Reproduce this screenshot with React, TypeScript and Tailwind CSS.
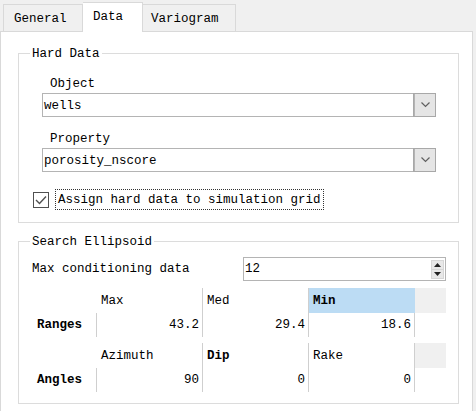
import type { JSX } from "react";

const font = { fontFamily: '"Liberation Mono", "DejaVu Sans Mono", monospace' };

function Chevron(): JSX.Element {
  return (
    <svg width="9" height="6" viewBox="0 0 9 6" fill="none">
      <polyline points="0.5,0.5 4.5,4.5 8.5,0.5" stroke="#606060" strokeWidth="1.2" />
    </svg>
  );
}

function Combo({ value }: { value: string }): JSX.Element {
  return (
    <div className="ml-[23px] mr-[22px] mt-[1px] flex h-[24px] border border-[#b4b4b4] bg-white">
      <div className="flex flex-1 items-center pl-[1px] pt-[1px] leading-[16px]">{value}</div>
      <div className="flex w-[21px] items-center justify-center border-l border-[#b4b4b4] bg-[#e5e5e5] outline outline-1 outline-[#a8a8a8]">
        <Chevron />
      </div>
    </div>
  );
}

function SpinBox({ value }: { value: string }): JSX.Element {
  return (
    <div className="mr-[12px] flex h-[24px] w-[203px] items-center border border-[#b4b4b4] bg-white">
      <div className="flex-1 pl-[1px] leading-[16px]">{value}</div>
      <div className="mr-[1px] flex h-[19px] w-[13px] flex-col gap-[1px] bg-[#d6d6d6] p-[1px]">
        <div className="flex flex-1 items-center justify-center bg-[#e8e8e8]">
          <svg width="7" height="4" viewBox="0 0 7 4"><polygon points="3.5,0 7,4 0,4" fill="#222" /></svg>
        </div>
        <div className="flex flex-1 items-center justify-center bg-[#e8e8e8]">
          <svg width="7" height="4" viewBox="0 0 7 4"><polygon points="0,0 7,0 3.5,4" fill="#222" /></svg>
        </div>
      </div>
    </div>
  );
}

type Head = { label: string; bold?: boolean; selected?: boolean };

function ParamTable({ title, heads, values, className }: { title: string; heads: Head[]; values: string[]; className: string }): JSX.Element {
  return (
    <div className={`ml-[13px] ${className}`}>
      <div className="flex h-[25px]">
        <div className="w-[65px]" />
        {heads.map((h) => (
          <div
            key={h.label}
            className={`flex w-[106px] items-center border-r pl-[4px] leading-[16px] ${
              h.selected ? "border-[#bcdcf4] bg-[#bcdcf4]" : "border-[#cfcfcf] bg-white"
            } ${h.bold ? "font-bold" : ""}`}
          >
            {h.label}
          </div>
        ))}
        <div className="w-[31px] bg-[#f0f0f0]" />
      </div>
      <div className="flex h-[24px]">
        <div className="flex w-[65px] items-center border-r border-[#cfcfcf] pl-[5px] font-bold leading-[16px]">{title}</div>
        {values.map((v, i) => (
          <div key={i} className="flex w-[106px] items-center justify-end border-r border-[#cfcfcf] pr-[3px] leading-[16px]">
            {v}
          </div>
        ))}
      </div>
    </div>
  );
}

export default function App(): JSX.Element {
  return (
    <div className="relative h-[411px] w-[476px] overflow-hidden bg-[#f0f0f0] text-[12.5px] text-black" style={font}>
      {/* Tabs */}
      <div className="flex h-[31px] items-end pl-[3px]">
        <div className="relative z-10 flex h-[27px] w-[80px] items-center border border-b-0 border-[#d9d9d9] bg-[#f0f0f0] pl-[10px] pt-[1px] leading-[16px]">
          General
        </div>
        <div className="relative z-10 -mb-px flex h-[30px] w-[60px] items-center border border-b-0 border-l-0 border-[#d9d9d9] bg-white pb-[2px] pl-[10px] leading-[16px]">
          Data
        </div>
        <div className="relative z-10 flex h-[27px] w-[93px] items-center border border-b-0 border-l-0 border-[#d9d9d9] bg-[#f0f0f0] pl-[8px] pt-[1px] leading-[16px]">
          Variogram
        </div>
      </div>

      {/* Pane */}
      <div className="h-[400px] w-[473px] border border-[#d9d9d9] bg-white pl-[17px] pr-[13px] pt-[21px]">
        {/* Hard Data */}
        <div className="relative h-[170px] border border-[#dcdcdc] pt-[22px]">
          <div className="absolute left-[11px] top-[-8px] bg-white px-[2px] leading-[16px]">Hard Data</div>
          <div className="pl-[31px] leading-[16px]">Object</div>
          <Combo value="wells" />
          <div className="mt-[14px] pl-[31px] leading-[16px]">Property</div>
          <Combo value="porosity_nscore" />
          <div className="mt-[17px] flex h-[21px] items-center">
            <div className="ml-[14px] flex h-[16px] w-[16px] items-center justify-center border border-[#505050] bg-white">
              <svg width="12" height="10" viewBox="0 0 12 10" fill="none">
                <polyline points="1,5 4.5,8.5 11,1.5" stroke="#505050" strokeWidth="1.4" />
              </svg>
            </div>
            <div className="ml-[6px] flex h-[21px] items-center border border-dotted border-[#333] px-[2px] pt-[1px] leading-[16px]">
              Assign hard data to simulation grid
            </div>
          </div>
        </div>

        {/* Search Ellipsoid */}
        <div className="relative mt-[18px] h-[163px] border border-[#dcdcdc] pt-[15px]">
          <div className="absolute left-[11px] top-[-8px] bg-white px-[2px] leading-[16px]">Search Ellipsoid</div>
          <div className="flex h-[24px] items-center">
            <div className="flex-1 pl-[13px] leading-[16px]">Max conditioning data</div>
            <SpinBox value="12" />
          </div>
          <ParamTable
            className="mt-[7px]"
            title="Ranges"
            heads={[{ label: "Max" }, { label: "Med" }, { label: "Min", bold: true, selected: true }]}
            values={["43.2", "29.4", "18.6"]}
          />
          <ParamTable
            className="mt-[6px]"
            title="Angles"
            heads={[{ label: "Azimuth" }, { label: "Dip", bold: true }, { label: "Rake" }]}
            values={["90", "0", "0"]}
          />
        </div>
      </div>
    </div>
  );
}
